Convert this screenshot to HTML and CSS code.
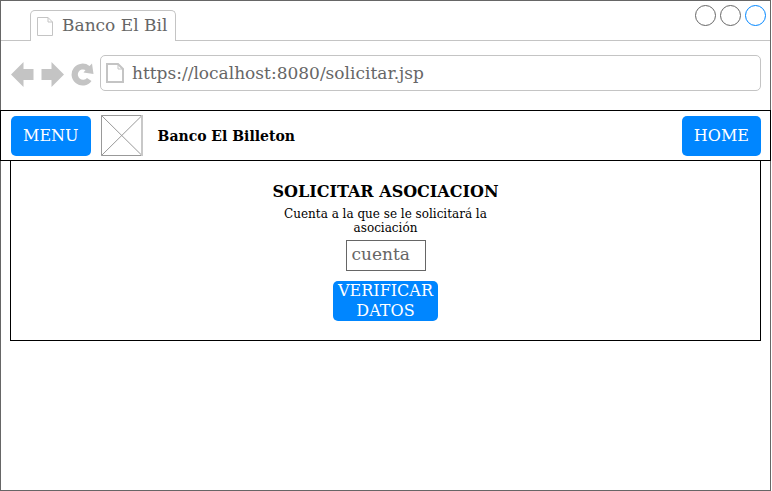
FILE: index.html
```html
<!DOCTYPE html>
<html lang="es">
<head>
<meta charset="utf-8">
<meta name="viewport" content="width=device-width, initial-scale=1">
<title>Banco El Billeton</title>
<link rel="stylesheet" href="styles.css">
</head>
<body>
<div class="window">
  <div class="tab-strip">
    <div class="tab">
      <svg class="tab-icon" width="16" height="19" viewBox="0 0 16 19" fill="none" stroke="#c4c4c4" aria-hidden="true"><path d="M.5 .5H11L15.500 5V18.500H.5ZM11 .5V5H15.500"/></svg>
      <span class="tab-title">Banco El Bil</span>
    </div>
    <div class="window-controls">
      <button class="control" type="button" aria-label="Minimizar"></button>
      <button class="control" type="button" aria-label="Maximizar"></button>
      <button class="control control-close" type="button" aria-label="Cerrar"></button>
    </div>
  </div>
  <div class="toolbar">
    <div class="nav">
      <button class="nav-button" type="button" aria-label="Atrás"><svg width="23" height="25" viewBox="0 0 23 25" fill="#c4c4c4"><path d="M0 12.500L12.500 0V7H22.500V18H12.500V25Z"/></svg></button>
      <button class="nav-button" type="button" aria-label="Adelante"><svg width="23" height="25" viewBox="0 0 23 25" fill="#c4c4c4"><path d="M23 12.500L10.500 0V7H.5V18H10.500V25Z"/></svg></button>
      <button class="nav-button" type="button" aria-label="Recargar"><svg width="23" height="25" viewBox="0 0 23 25" fill="#c4c4c4"><path d="M18.500 4L21 1.500L22.500 12L12.500 10.500L14.500 8A5.200 5.200 0 1 0 16 16L20.500 19A11 11 0 1 1 18.500 4Z"/></svg></button>
    </div>
    <div class="address">
      <svg width="18" height="20" viewBox="0 0 18 20" fill="none" stroke="#c4c4c4" aria-hidden="true"><path d="M1 1H12L17 6V19H1Z" stroke-width="2"/><path d="M12 1V6H17"/></svg>
      <input class="address-input" type="text" aria-label="Dirección" value="https://localhost:8080/solicitar.jsp">
    </div>
  </div>
  <header class="site-header">
    <button class="button" type="button">MENU</button>
    <svg class="logo" width="42" height="41" viewBox="0 0 42 41" fill="none" stroke="#999" role="img" aria-label="Logo"><path d="M41 .5H.5V40.500H41M.5 .5L41 40.500M41 .5L.5 40.500"/><path d="M41 0V41" stroke="#c8c8c8" stroke-width="2"/></svg>
    <span class="site-name">Banco El Billeton</span>
    <button class="button home" type="button">HOME</button>
  </header>
  <main class="panel">
    <form class="form">
      <h1 class="heading">SOLICITAR ASOCIACION</h1>
      <label class="label" for="cuenta">Cuenta a la que se le solicitará la asociación</label>
      <input class="field" id="cuenta" type="text" placeholder="cuenta">
      <button class="button verify" type="button">VERIFICAR DATOS</button>
    </form>
  </main>
</div>
</body>
</html>
```
FILE: styles.css
```css
* {
  box-sizing: border-box;
}

body {
  margin: 0 1px 0 0;
  background: #fff;
  color: #000;
  font-family: "DejaVu Serif", serif;
  font-size: 16px;
  line-height: 20px;
}

button,
input {
  margin: 0;
  padding: 0;
  border: 0;
  background: none;
  font: inherit;
}

svg {
  display: block;
  flex: none;
}

.window {
  min-height: 100vh;
  border: 1px solid #666;
}

.tab-strip {
  display: flex;
  justify-content: space-between;
  align-items: flex-end;
  height: 40px;
  padding: 0 4px 0 29px;
  border-bottom: 1px solid #c4c4c4;
}

.tab {
  display: flex;
  align-items: center;
  gap: 9px;
  height: 31px;
  margin-bottom: -1px;
  padding: 0 8px 2px 6px;
  border: 1px solid #c4c4c4;
  border-bottom: 0;
  border-radius: 5px 5px 0 0;
  background: #fff;
}

.tab-icon {
  margin-top: 2px;
}

.tab-title {
  color: #666;
  font-size: 17px;
}

.window-controls {
  display: flex;
  align-self: flex-start;
  gap: 4px;
  margin-top: 4px;
}

.control {
  width: 21px;
  height: 21px;
  border: 1px solid #666;
  border-radius: 50%;
}

.control-close {
  border-color: #0086ff;
}

.toolbar {
  display: flex;
  align-items: center;
  gap: 6px;
  padding: 14px 9px 19px 10px;
}

.nav {
  display: flex;
  gap: 7px;
  margin-top: 3px;
}

.address {
  display: flex;
  flex: 1;
  align-items: center;
  gap: 8px;
  height: 36px;
  padding: 0 5px;
  border: 1px solid #c4c4c4;
  border-radius: 5px;
}

.address-input {
  flex: 1;
  min-width: 0;
  color: #666;
  font-size: 17px;
}

.site-header {
  display: flex;
  align-items: center;
  margin: 0 -1px;
  padding: 4px 9px 4px 10px;
  border: 1px solid #000;
}

.button {
  min-height: 40px;
  padding: 0 12px;
  border-radius: 5px;
  background: #0086ff;
  color: #fff;
}

.logo {
  margin: 0 15px 0 10px;
}

.site-name {
  font-size: 14px;
  font-weight: bold;
}

.home {
  margin-left: auto;
}

.panel {
  margin: -1px 9px 0;
  padding: 21px 0 19px;
  border: 1px solid #000;
}

.form {
  display: flex;
  flex-direction: column;
  align-items: center;
}

.heading {
  margin: 0 0 5px;
  font-size: 16px;
  line-height: 20px;
}

.label {
  max-width: 210px;
  margin-bottom: 5px;
  font-size: 12px;
  line-height: 14px;
  text-align: center;
}

.field {
  width: 80px;
  height: 31px;
  margin-bottom: 10px;
  padding: 0 5px 4px;
  border: 1px solid #666;
  color: #666;
  font-size: 17px;
}

.field::placeholder {
  color: #666;
  opacity: 1;
}

.verify {
  width: 105px;
  padding: 0 4px;
}
```
